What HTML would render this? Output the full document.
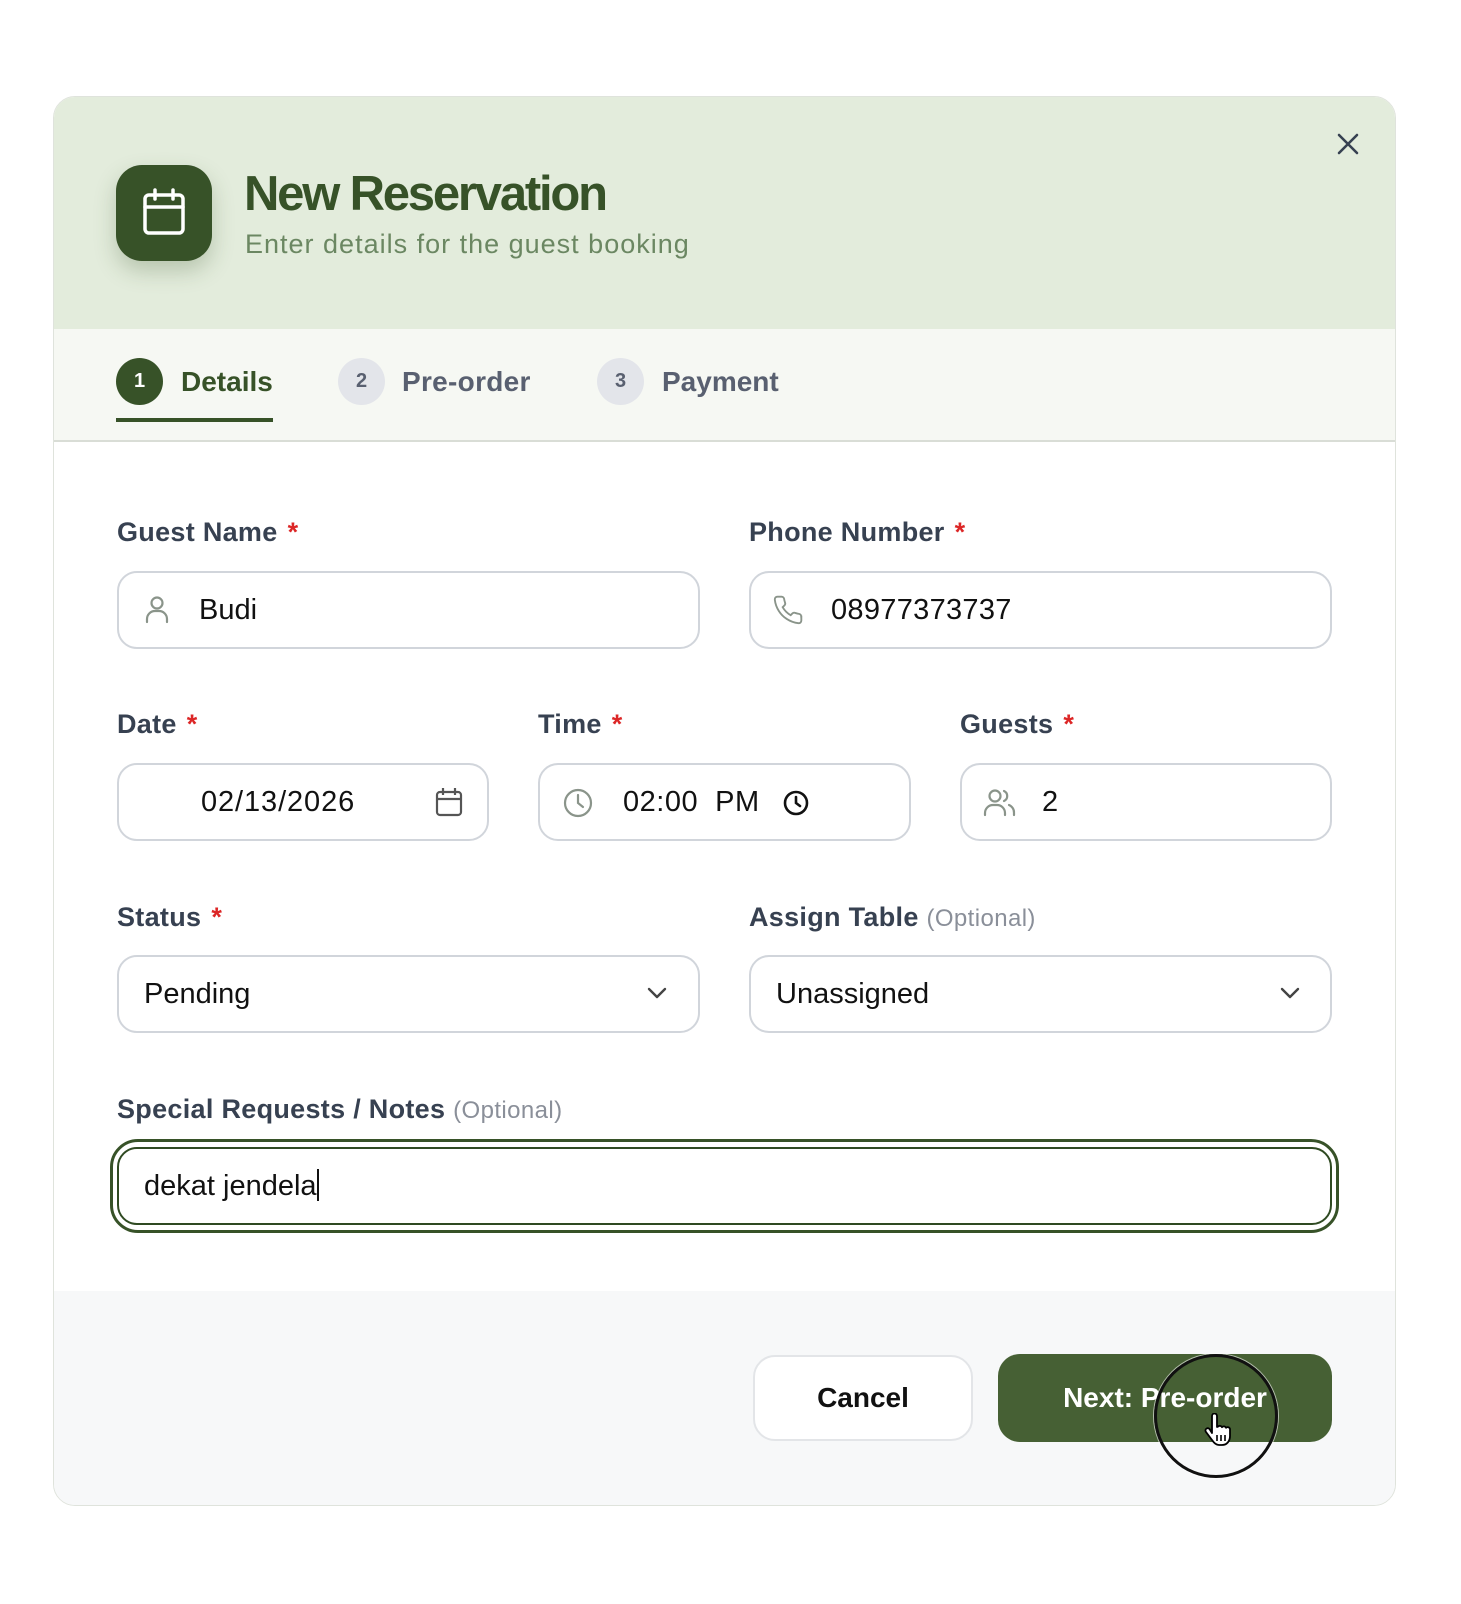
<!DOCTYPE html>
<html><head><meta charset="utf-8">
<style>
*{box-sizing:border-box;margin:0;padding:0}
body{width:1461px;height:1604px;background:#fff;font-family:"Liberation Sans",sans-serif;position:relative;overflow:hidden}
.a{position:absolute}
.card{left:53px;top:96px;width:1343px;height:1410px;border:1px solid #dfe3dc;border-radius:22px;overflow:hidden;background:#fff}
.hdr{left:0;top:0;width:100%;height:232px;background:#e3ecdc}
.tabs{left:0;top:232px;width:100%;height:113px;background:#f6f8f3;border-bottom:2px solid #d9ddd6}
.foot{left:0;top:1194px;width:100%;height:216px;background:#f7f8f9}
.lbl{font-size:27px;font-weight:bold;color:#374151;line-height:32px;letter-spacing:.3px}
.lbl b{color:#dc2626;font-weight:bold;margin-left:10px}
.lbl i{font-style:normal;font-weight:normal;color:#8a8f99;font-size:24px;letter-spacing:.4px}
.inp{border:2px solid #d1d5db;border-radius:20px;background:#fff;height:78px;font-size:29px;color:#111;line-height:74px}
.circ{width:47px;height:47px;border-radius:50%;text-align:center;line-height:47px;font-size:20px;font-weight:bold}
.tab{font-size:28px;font-weight:bold;line-height:34px}
</style></head><body>
<div class="a card">
  <div class="a hdr"></div>
  <div class="a tabs"></div>
  <div class="a foot"></div>
</div>
<div class="a" style="left:116px;top:165px;width:96px;height:96px;border-radius:26px;background:#375228;box-shadow:0 10px 22px rgba(55,82,40,.25)">
<svg width="96" height="96" viewBox="0 0 96 96"><g fill="none" stroke="#fff" stroke-width="3.5" stroke-linecap="round" stroke-linejoin="round"><rect x="29" y="30" width="38" height="38" rx="4"/><path d="M29 42h38M39 25v9M57 25v9"/></g></svg>
</div>
<div class="a" style="left:244px;top:165px;font-size:49px;font-weight:bold;color:#375228;letter-spacing:-2.2px;line-height:58px">New Reservation</div>
<div class="a" style="left:245px;top:228px;font-size:27px;color:#6b8762;line-height:32px;letter-spacing:1px">Enter details for the guest booking</div>
<svg class="a" style="left:1334px;top:130px" width="28" height="28" viewBox="0 0 28 28"><path d="M5 5L23 23M23 5L5 23" stroke="#374151" stroke-width="2.6" stroke-linecap="round"/></svg>
<div class="a circ" style="left:116px;top:358px;background:#375228;color:#fff">1</div>
<div class="a tab" style="left:181px;top:365px;color:#375228">Details</div>
<div class="a" style="left:116px;top:418px;width:157px;height:4px;background:#375228"></div>
<div class="a circ" style="left:338px;top:358px;background:#e3e5ea;color:#596070">2</div>
<div class="a tab" style="left:402px;top:365px;color:#596070;letter-spacing:.3px">Pre-order</div>
<div class="a circ" style="left:597px;top:358px;background:#e3e5ea;color:#596070">3</div>
<div class="a tab" style="left:662px;top:365px;color:#596070">Payment</div>
<div class="a lbl" style="left:117px;top:516px">Guest Name<b>*</b></div>
<div class="a lbl" style="left:749px;top:516px">Phone Number<b>*</b></div>
<div class="a inp" style="left:117px;top:571px;width:583px;padding-left:80px">Budi</div>
<svg class="a" style="left:142px;top:594px" width="30" height="32" viewBox="0 0 30 32"><g fill="none" stroke="#8a948a" stroke-width="2.2" stroke-linecap="round"><circle cx="15" cy="9" r="5.5"/><path d="M5 28v-3a8 8 0 0 1 8-8h4a8 8 0 0 1 8 8v3"/></g></svg>
<div class="a inp" style="left:749px;top:571px;width:583px;padding-left:80px;letter-spacing:.3px">08977373737</div>
<svg class="a" style="left:772px;top:594px" width="32" height="32" viewBox="0 0 24 24"><path d="M22 16.9v3a2 2 0 0 1-2.2 2 19.8 19.8 0 0 1-8.6-3.1 19.5 19.5 0 0 1-6-6A19.8 19.8 0 0 1 2.1 4.2 2 2 0 0 1 4.1 2h3a2 2 0 0 1 2 1.7c.1 1 .4 1.9.7 2.8a2 2 0 0 1-.5 2.1L8 9.9a16 16 0 0 0 6 6l1.3-1.3a2 2 0 0 1 2.1-.4c.9.3 1.8.6 2.8.7a2 2 0 0 1 1.7 2z" fill="none" stroke="#8a948a" stroke-width="1.4"/></svg>
<div class="a lbl" style="left:117px;top:708px">Date<b>*</b></div>
<div class="a lbl" style="left:538px;top:708px">Time<b>*</b></div>
<div class="a lbl" style="left:960px;top:708px">Guests<b>*</b></div>
<div class="a inp" style="left:117px;top:763px;width:372px;padding-left:82px;letter-spacing:.9px">02/13/2026</div>
<svg class="a" style="left:434px;top:786px" width="30" height="32" viewBox="0 0 30 32"><g fill="none" stroke="#555" stroke-width="2.2"><rect x="3" y="6" width="24" height="23" rx="3"/><path d="M3 13h24M9 2v7M21 2v7"/></g></svg>
<div class="a inp" style="left:538px;top:763px;width:373px;padding-left:83px;letter-spacing:.5px">02:00&nbsp; PM</div>
<svg class="a" style="left:562px;top:787px" width="32" height="32" viewBox="0 0 32 32"><g fill="none" stroke="#8a948a" stroke-width="2.2" stroke-linecap="round"><circle cx="16" cy="16" r="13"/><path d="M16 8v8l5 4"/></g></svg>
<svg class="a" style="left:782px;top:789px" width="28" height="28" viewBox="0 0 28 28"><g fill="none" stroke="#111" stroke-width="2.6" stroke-linecap="round"><circle cx="14" cy="14" r="11"/><path d="M14 8v6l4 3"/></g></svg>
<div class="a inp" style="left:960px;top:763px;width:372px;padding-left:80px">2</div>
<svg class="a" style="left:983px;top:787px" width="34" height="32" viewBox="0 0 34 32"><g fill="none" stroke="#8a948a" stroke-width="2.2" stroke-linecap="round"><circle cx="12" cy="9" r="5.5"/><path d="M2 28v-2a8 8 0 0 1 8-8h4a8 8 0 0 1 8 8v2M21 4a5.5 5.5 0 0 1 0 10M26 18a8 8 0 0 1 5 8v2"/></g></svg>
<div class="a lbl" style="left:117px;top:901px">Status<b>*</b></div>
<div class="a lbl" style="left:749px;top:901px">Assign Table <i>(Optional)</i></div>
<div class="a inp" style="left:117px;top:955px;width:583px;padding-left:25px">Pending</div>
<svg class="a" style="left:645px;top:983px" width="24" height="20" viewBox="0 0 24 20"><path d="M4 6l8 8 8-8" fill="none" stroke="#444" stroke-width="2.4" stroke-linecap="round" stroke-linejoin="round"/></svg>
<div class="a inp" style="left:749px;top:955px;width:583px;padding-left:25px">Unassigned</div>
<svg class="a" style="left:1278px;top:983px" width="24" height="20" viewBox="0 0 24 20"><path d="M4 6l8 8 8-8" fill="none" stroke="#444" stroke-width="2.4" stroke-linecap="round" stroke-linejoin="round"/></svg>
<div class="a lbl" style="left:117px;top:1093px">Special Requests / Notes <i>(Optional)</i></div>
<div class="a" style="left:110px;top:1139px;width:1229px;height:94px;border:3px solid #375228;border-radius:28px"></div>
<div class="a inp" style="left:117px;top:1147px;width:1215px;border:2.5px solid #2f4a22;padding-left:25px">dekat jendela<span style="display:inline-block;width:2px;height:32px;background:#111;vertical-align:-6px"></span></div>
<div class="a" style="left:753px;top:1355px;width:220px;height:86px;border:2px solid #e3e5e8;border-radius:22px;background:#fff;text-align:center;line-height:82px;font-size:28px;font-weight:bold;color:#111">Cancel</div>
<div class="a" style="left:998px;top:1354px;width:334px;height:88px;border-radius:22px;background:#466034;text-align:center;line-height:88px;font-size:28px;font-weight:bold;color:#fff">Next: Pre-order</div>
<div class="a" style="left:1154px;top:1354px;width:124px;height:124px;border-radius:50%;border:3px solid #111;box-shadow:0 0 0 1px rgba(255,255,255,.6)"></div>
<svg class="a" style="left:1204px;top:1413px" width="30" height="34" viewBox="0 0 30 34"><path d="M8 3a2.5 2.5 0 0 1 5 0v11l1-.3a2.4 2.4 0 0 1 4 .5 2.4 2.4 0 0 1 4 .6 2.4 2.4 0 0 1 4 1.2v7c0 5-3 9-8 9h-3c-3 0-5-2-7-5l-6-8a2.3 2.3 0 0 1 3.5-3L8 20z" fill="#fff" stroke="#000" stroke-width="1.8" stroke-linejoin="round"/><path d="M13 22v6M17 22v6M21 22v6" stroke="#000" stroke-width="1.6"/></svg>
</body></html>
